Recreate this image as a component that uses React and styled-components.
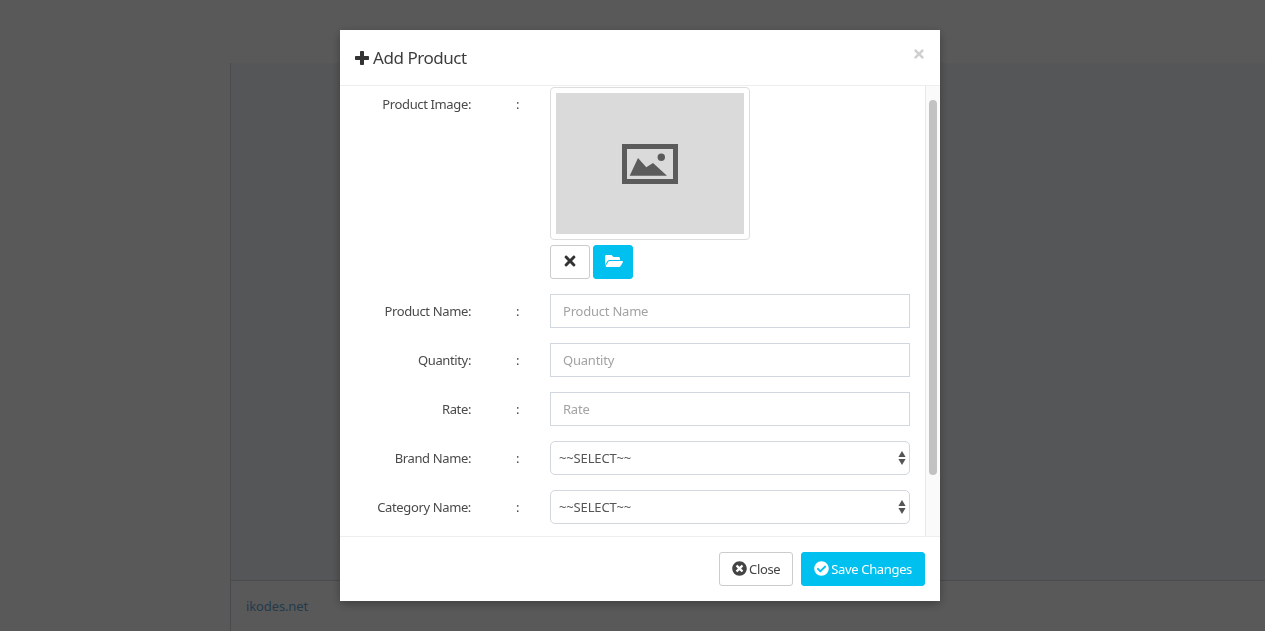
import React from "react";
import styled, { createGlobalStyle } from "styled-components";
import { FaTimes, FaFolderOpen, FaTimesCircle, FaCheckCircle } from "react-icons/fa";

const Global = createGlobalStyle`
  * { box-sizing: border-box; }
  html, body { margin: 0; height: 100%; overflow: hidden; }
  body { font-family: "Noto Sans", "Liberation Sans", sans-serif; font-size: 13px; color: #4a4a4a; }
`;
const Page = styled.div`
  height: 631px; display: grid; grid-template-columns: 231px 1fr; grid-template-rows: 63px 1fr 51px; background: #fff;
`;
const TopBar = styled.header` grid-column: 1 / 3; background: #fff; `;
const Sidebar = styled.aside` grid-row: 2 / 4; background: #fff; border-right: 1px solid #d2d6de; `;
const Content = styled.main` background: #f4f6f9; `;
const Footer = styled.footer`
  background: #fff; border-top: 1px solid #d2d6de; padding: 15px; font-size: 13px; letter-spacing: -.12px; line-height: 20px;
  a { color: #6aa8d8; text-decoration: none; }
`;
const Backdrop = styled.div` position: fixed; inset: 0; background: rgba(0,0,0,.65); `;
const Modal = styled.section`
  position: fixed; left: 340px; top: 30px; width: 600px; height: 571px; background: #fff;
  display: flex; flex-direction: column; box-shadow: 0 3px 9px rgba(0,0,0,.3);
`;
const Header = styled.div`
  height: 56px; flex: none; border-bottom: 1px solid #eee; padding: 0 15px; display: flex; align-items: center; justify-content: space-between;
`;
const Title = styled.h4`
  margin: 0; font-size: 17px; font-weight: 400; color: #3d3d3d; letter-spacing: -.45px; display: flex; align-items: center; gap: 4px;
`;
const Dismiss = styled.button`
  border: 0; background: none; padding: 0; margin: 0 -1px 8px 0; color: #d0d0d0; display: flex; font-size: 14px;
`;
const Body = styled.div` height: 450px; flex: none; display: flex; overflow: hidden; `;
const Form = styled.form` flex: 1; padding-top: 1px; `;
const Rail = styled.div`
  width: 15px; flex: none; background: #fafafa; border-left: 1px solid #e8e8e8; padding: 14px 3px 0 3px;
`;
const RailThumb = styled.div` height: 375px; background: #c2c2c2; border-radius: 4px; `;
const Row = styled.div`
  display: grid; grid-template-columns: 131px 79px 360px; margin-bottom: 15px; min-height: 34px; align-items: ${p => (p.$top ? "start" : "center")};
`;
const Label = styled.label` text-align: right; letter-spacing: -.37px; padding-top: ${p => (p.$top ? "8px" : 0)}; `;
const Colon = styled.span` padding-left: 45px; padding-top: ${p => (p.$top ? "8px" : 0)}; `;
const ImageField = styled.div` display: flex; flex-direction: column; gap: 5px; `;
const Thumb = styled.div`
  width: 200px; height: 153px; padding: 5px; border: 1px solid #ddd; border-radius: 4px;
`;
const Placeholder = styled.div`
  height: 141px; background: #dadada; display: flex; align-items: center; justify-content: center;
`;
const Tools = styled.div` display: flex; gap: 3px; `;
const IconButton = styled.button`
  width: 40px; height: 34px; border-radius: 3px; display: flex; align-items: center; justify-content: center; font-size: 16px;
  padding: 0 0 2px ${p => (p.$primary ? "2px" : "0")};
  border: 1px solid ${p => (p.$primary ? "#00c0ef" : "#ccc")};
  background: ${p => (p.$primary ? "#00c0ef" : "#fff")};
  color: ${p => (p.$primary ? "#fff" : "#333")};
`;
const Input = styled.input`
  width: 360px; height: 34px; border: 1px solid #d2d6de; padding: 0 12px; font: inherit; letter-spacing: -.22px; color: #555; outline: 0;
  &::placeholder { color: #a3a3a3; opacity: 1; }
`;
const SelectWrap = styled.div` position: relative; width: 360px; height: 34px; `;
const Select = styled.select`
  appearance: none; width: 100%; height: 100%; border: 1px solid #d2d6de; border-radius: 5px; background: #fff; padding: 0 8px; font: inherit; letter-spacing: -.15px; color: #555; outline: 0;
`;
const Carets = styled.svg` position: absolute; right: 4px; top: 10px; width: 8px; height: 14px; pointer-events: none; `;
const ModalFooter = styled.div`
  flex: 1; border-top: 1px solid #eee; padding: 15px; display: flex; justify-content: flex-end; gap: 8px;
`;
const Action = styled.button`
  height: 34px; padding: 0 12px; border-radius: 3px; font: inherit; letter-spacing: -.35px; display: flex; align-items: center; gap: 2px;
  border: 1px solid ${p => (p.$primary ? "#00c0ef" : "#ccc")};
  background: ${p => (p.$primary ? "#00c0ef" : "#fff")};
  color: ${p => (p.$primary ? "#fff" : "#444")};
  svg { font-size: 15px; margin-bottom: 2px; flex: none; }
`;

const Field = ({ label, children }) => (
  <Row>
    <Label>{label}</Label>
    <Colon>:</Colon>
    {children}
  </Row>
);
const Dropdown = () => (
  <SelectWrap>
    <Select defaultValue="">
      <option value="">~~SELECT~~</option>
    </Select>
    <Carets viewBox="0 0 8 14"><path d="M4 0l3.6 6H.4zM4 14L.4 8h7.2z" fill="#555" /></Carets>
  </SelectWrap>
);

export default function App() {
  return (
    <>
      <Global />
      <Page>
        <TopBar />
        <Sidebar />
        <Content />
        <Footer><a href="#">ikodes.net</a></Footer>
      </Page>
      <Backdrop />
      <Modal>
        <Header>
          <Title>
            <svg width="14" height="14" viewBox="0 0 14 14">
              <path d="M5.8 0h2.4a.8.8 0 0 1 .8.8V5h4.2a.8.8 0 0 1 .8.8v2.4a.8.8 0 0 1-.8.8H9v4.2a.8.8 0 0 1-.8.8H5.8a.8.8 0 0 1-.8-.8V9H.8A.8.8 0 0 1 0 8.2V5.8A.8.8 0 0 1 .8 5H5V.8a.8.8 0 0 1 .8-.8z" fill="#333" />
            </svg>
            Add Product
          </Title>
          <Dismiss aria-label="Close"><FaTimes /></Dismiss>
        </Header>
        <Body>
          <Form>
            <Row $top>
              <Label $top>Product Image:</Label>
              <Colon $top>:</Colon>
              <ImageField>
                <Thumb>
                  <Placeholder>
                    <svg width="56" height="40" viewBox="0 0 56 40">
                      <path fillRule="evenodd" fill="#5b5b5b" d="M0 0h56v40H0zM5 5v30h46V5z" />
                      <circle cx="39.3" cy="13.3" r="3.7" fill="#5b5b5b" />
                      <path d="M7.7 31.7L16 14l8.3 9.3L31 19l14 12.7z" fill="#5b5b5b" />
                    </svg>
                  </Placeholder>
                </Thumb>
                <Tools>
                  <IconButton aria-label="Remove"><FaTimes /></IconButton>
                  <IconButton $primary aria-label="Browse"><FaFolderOpen size={18} /></IconButton>
                </Tools>
              </ImageField>
            </Row>
            <Field label="Product Name:"><Input placeholder="Product Name" /></Field>
            <Field label="Quantity:"><Input placeholder="Quantity" /></Field>
            <Field label="Rate:"><Input placeholder="Rate" /></Field>
            <Field label="Brand Name:"><Dropdown /></Field>
            <Field label="Category Name:"><Dropdown /></Field>
          </Form>
          <Rail><RailThumb /></Rail>
        </Body>
        <ModalFooter>
          <Action><FaTimesCircle />Close</Action>
          <Action $primary><FaCheckCircle />Save Changes</Action>
        </ModalFooter>
      </Modal>
    </>
  );
}
